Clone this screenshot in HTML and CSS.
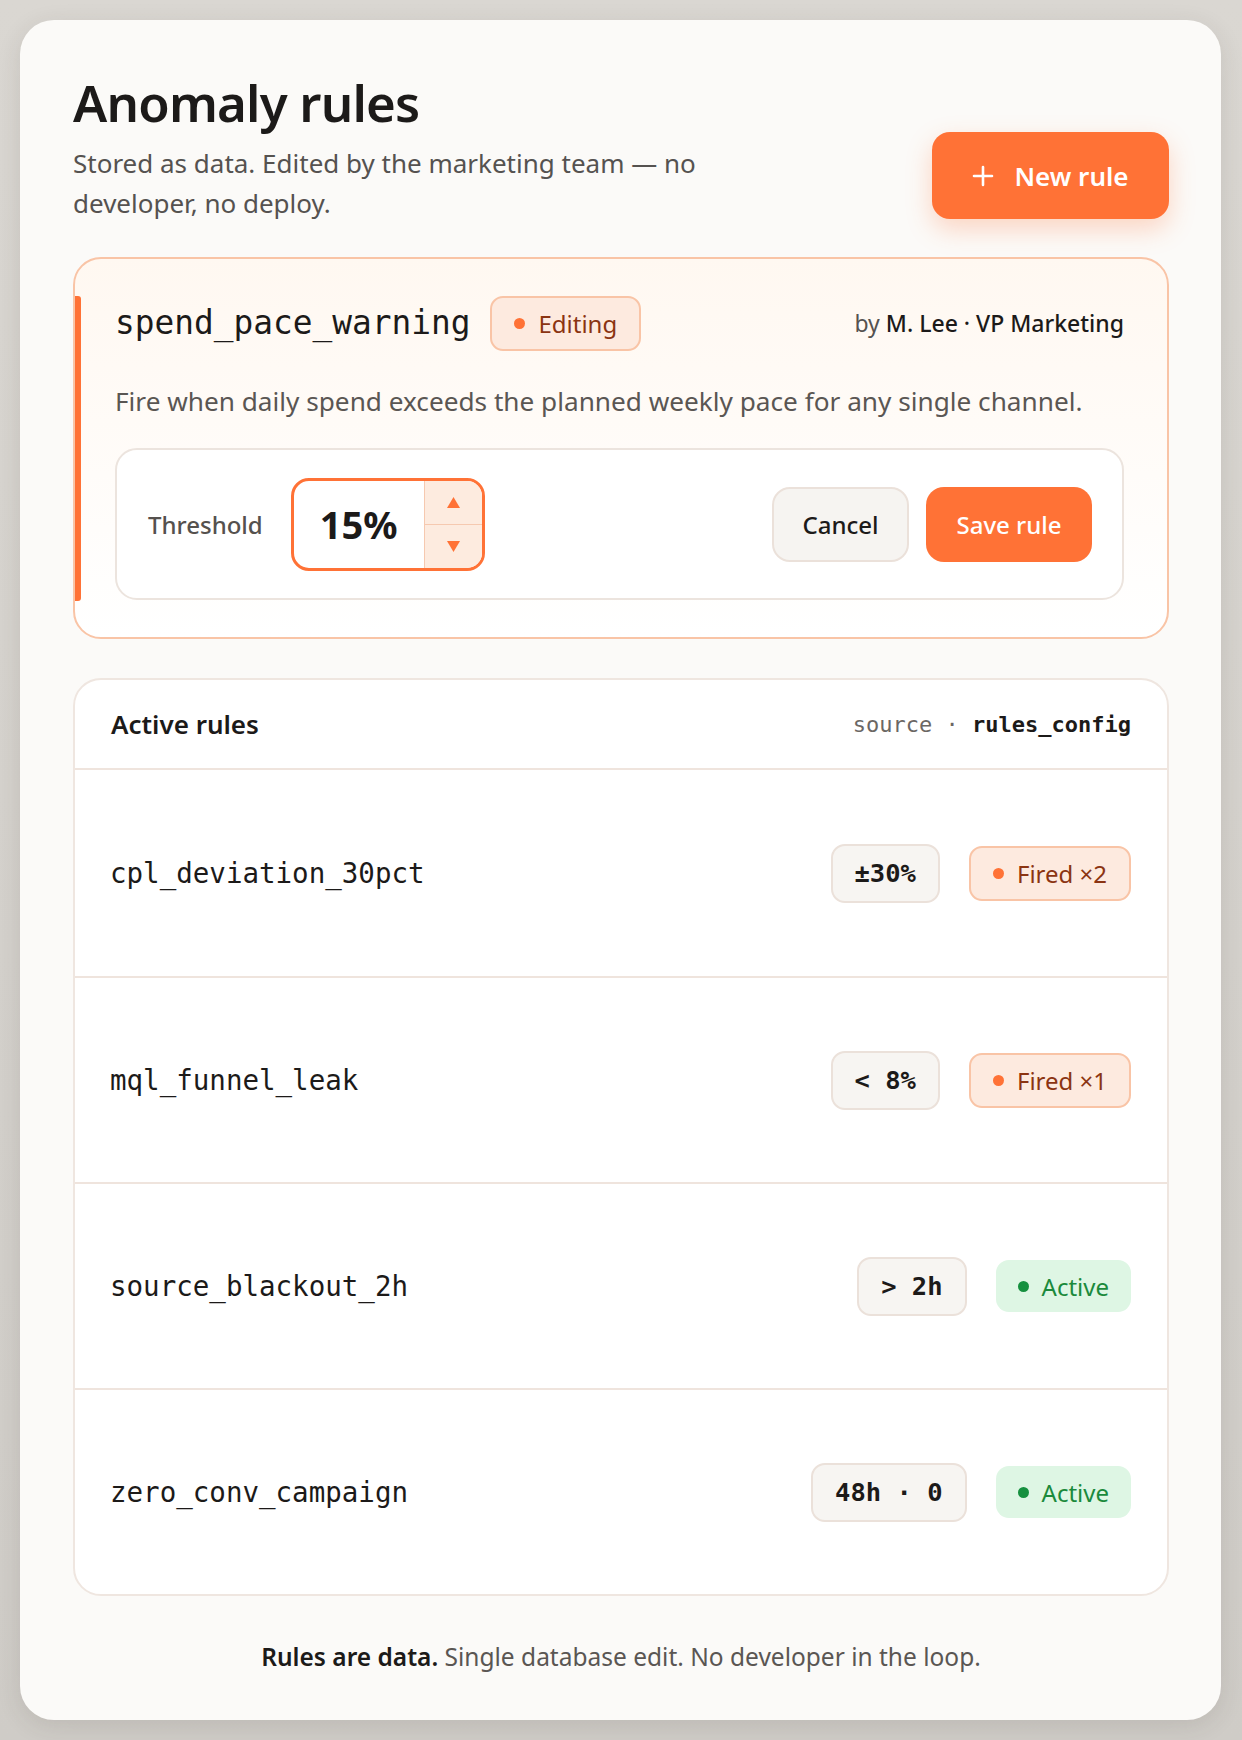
FILE: index.html
```html
<!DOCTYPE html>
<html lang="en">
<head>
    <meta charset="UTF-8">
    <meta name="viewport" content="width=device-width, initial-scale=1.0">
    <title>Anomaly rules</title>
    <link rel="stylesheet" href="styles.css">
</head>
<body>
    <div class="panel">
        <header class="top">
            <div class="intro">
                <h1>Anomaly rules</h1>
                <p>Stored as data. Edited by the marketing team — no developer, no deploy.</p>
            </div>
            <button class="btn-new">
                <svg width="22" height="22" viewBox="0 0 22 22"><path d="M11 2v18M2 11h18" stroke="#fff" stroke-width="2.6" stroke-linecap="round"/></svg>
                New rule
            </button>
        </header>

        <section class="editor">
            <div class="editor-head">
                <span class="rule-name">spend_pace_warning</span>
                <span class="pill pill-orange"><i class="dot"></i>Editing</span>
                <span class="author">by <b>M. Lee · VP Marketing</b></span>
            </div>
            <p class="desc">Fire when daily spend exceeds the planned weekly pace for any single channel.</p>
            <div class="threshold">
                <span class="label">Threshold</span>
                <div class="stepper">
                    <span class="value">15%</span>
                    <div class="arrows">
                        <span class="arrow"><svg width="13" height="11" viewBox="0 0 13 11"><path d="M6.5 0L13 11H0z" fill="#ff7236"/></svg></span>
                        <span class="arrow"><svg width="13" height="11" viewBox="0 0 13 11"><path d="M0 0h13L6.5 11z" fill="#ff7236"/></svg></span>
                    </div>
                </div>
                <div class="actions">
                    <button class="btn-cancel">Cancel</button>
                    <button class="btn-save">Save rule</button>
                </div>
            </div>
        </section>

        <section class="rules">
            <div class="rules-head">
                <span class="rules-title">Active rules</span>
                <span class="source">source · <b>rules_config</b></span>
            </div>
            <div class="rule">
                <span class="name">cpl_deviation_30pct</span>
                <span class="cond">±30%</span>
                <span class="pill pill-orange"><i class="dot"></i>Fired ×2</span>
            </div>
            <div class="rule">
                <span class="name">mql_funnel_leak</span>
                <span class="cond">&lt; 8%</span>
                <span class="pill pill-orange"><i class="dot"></i>Fired ×1</span>
            </div>
            <div class="rule">
                <span class="name">source_blackout_2h</span>
                <span class="cond">&gt; 2h</span>
                <span class="pill pill-green"><i class="dot"></i>Active</span>
            </div>
            <div class="rule">
                <span class="name">zero_conv_campaign</span>
                <span class="cond">48h · 0</span>
                <span class="pill pill-green"><i class="dot"></i>Active</span>
            </div>
        </section>

        <p class="footer"><b>Rules are data.</b> Single database edit. No developer in the loop.</p>
    </div>
</body>
</html>
```

FILE: styles.css
```css
* {
    box-sizing: border-box;
}
body {
    margin: 0;
    padding: 20px 21px 20px 20px;
    background: linear-gradient(180deg, #dad7d2 0%, #cfccc7 100%);
    font-family: "Noto Sans", "Open Sans", sans-serif;
    color: #1c1a19;
}
.panel {
    height: 1700px;
    background: #fbfaf8;
    border-radius: 34px;
    box-shadow: 0 6px 24px rgba(60, 50, 40, 0.12);
    padding: 46px 52px 0 53px;
}
.top {
    display: flex;
    justify-content: space-between;
    align-items: flex-end;
}
h1 {
    margin: 0;
    font-size: 51px;
    font-weight: 600;
    letter-spacing: -0.8px;
    line-height: 72px;
}
.intro p {
    margin: 5px 0 0;
    max-width: 650px;
    font-size: 26px;
    line-height: 40px;
    color: #555250;
}
.btn-new {
    width: 237px;
    height: 87px;
    margin-bottom: 4px;
    display: flex;
    align-items: center;
    justify-content: center;
    gap: 20px;
    border: none;
    border-radius: 18px;
    background: #ff7236;
    color: #fff;
    font-family: inherit;
    font-size: 26px;
    font-weight: 600;
    box-shadow: 0 10px 26px rgba(255, 114, 54, 0.28);
}

/* rule being edited */
.editor {
    position: relative;
    margin-top: 34px;
    border: 2px solid #f9c4a6;
    border-radius: 28px;
    background: linear-gradient(180deg, #fff8f1 0%, #ffffff 100%);
    padding: 37px 43px 37px 40px;
}
.editor::before {
    content: "";
    position: absolute;
    left: 0;
    top: 37px;
    bottom: 36px;
    width: 6px;
    border-radius: 0 3px 3px 0;
    background: #ff7236;
}
.editor-head {
    display: flex;
    align-items: center;
    gap: 20px;
    height: 54px;
}
.rule-name {
    font-family: "DejaVu Sans Mono", monospace;
    font-size: 32.8px;
    color: #1c1a19;
}
.author {
    margin-left: auto;
    font-size: 23px;
    color: #555250;
}
.author b {
    font-weight: 500;
    color: #1c1a19;
}
.desc {
    margin: 33px 0 29px;
    font-size: 26.2px;
    line-height: 36px;
    color: #5a5653;
}
.threshold {
    display: flex;
    align-items: center;
    height: 152px;
    padding: 0 30px 0 31px;
    border: 2px solid #ece4de;
    border-radius: 22px;
    background: #fff;
}
.label {
    font-size: 24px;
    font-weight: 500;
    color: #55514e;
}
.stepper {
    display: flex;
    margin-left: 28px;
    width: 194px;
    height: 93px;
    border: 3px solid #ff7236;
    border-radius: 18px;
    overflow: hidden;
}
.value {
    flex: 1;
    display: flex;
    align-items: center;
    justify-content: center;
    font-size: 38px;
    font-weight: 700;
    color: #1c1a19;
}
.arrows {
    width: 58px;
    display: flex;
    flex-direction: column;
    background: #fdebdf;
    border-left: 1px solid #f6c9b0;
}
.arrow {
    flex: 1;
    display: flex;
    align-items: center;
    justify-content: center;
}
.arrow + .arrow {
    border-top: 1px solid #f6c9b0;
}
.actions {
    margin-left: auto;
    display: flex;
    gap: 17px;
}
.actions button {
    height: 75px;
    border-radius: 18px;
    font-family: inherit;
    font-size: 24px;
    font-weight: 500;
}
.btn-cancel {
    width: 137px;
    border: 2px solid #ebe1da;
    background: #f6f4f1;
    color: #1c1a19;
}
.btn-save {
    width: 166px;
    border: none;
    background: #ff7236;
    color: #fff;
}

/* list of active rules */
.rules {
    margin-top: 39px;
    border: 2px solid #efe6e0;
    border-radius: 28px;
    background: #fff;
    overflow: hidden;
}
.rules-head {
    display: flex;
    justify-content: space-between;
    align-items: center;
    height: 90px;
    padding: 0 36px;
    border-bottom: 2px solid #efe4dd;
}
.rules-title {
    font-size: 26px;
    font-weight: 600;
}
.source {
    font-family: "DejaVu Sans Mono", monospace;
    font-size: 22px;
    color: #6b6764;
}
.source b {
    color: #1c1a19;
}
.rule {
    display: flex;
    align-items: center;
    gap: 29px;
    height: 206px;
    padding: 0 36px 0 35px;
}
.rule + .rule {
    border-top: 2px solid #efe4dd;
}
.name {
    margin-right: auto;
    font-family: "DejaVu Sans Mono", monospace;
    font-size: 27.5px;
    color: #1c1a19;
}
.cond {
    height: 59px;
    padding: 0 22px;
    display: flex;
    align-items: center;
    border: 2px solid #ebe1da;
    border-radius: 14px;
    background: #f7f5f2;
    font-family: "DejaVu Sans Mono", monospace;
    font-size: 25.5px;
    font-weight: 700;
    white-space: pre;
}
.pill {
    display: flex;
    align-items: center;
    gap: 13px;
    height: 55px;
    padding: 0 22px;
    border-radius: 13px;
    font-size: 24px;
}
.pill-orange {
    border: 2px solid #f9c4a6;
    background: #fdeadf;
    color: #8b3412;
}
.pill-green {
    height: 52px;
    background: #def6e4;
    color: #1b8a3c;
}
.dot {
    width: 11px;
    height: 11px;
    border-radius: 50%;
    background: #ff7236;
}
.pill-green .dot {
    background: #16903f;
}
.footer {
    margin: 44px 0 0;
    text-align: center;
    font-size: 24.5px;
    color: #5a5653;
}
.footer b {
    font-weight: 600;
    color: #1c1a19;
}
```
